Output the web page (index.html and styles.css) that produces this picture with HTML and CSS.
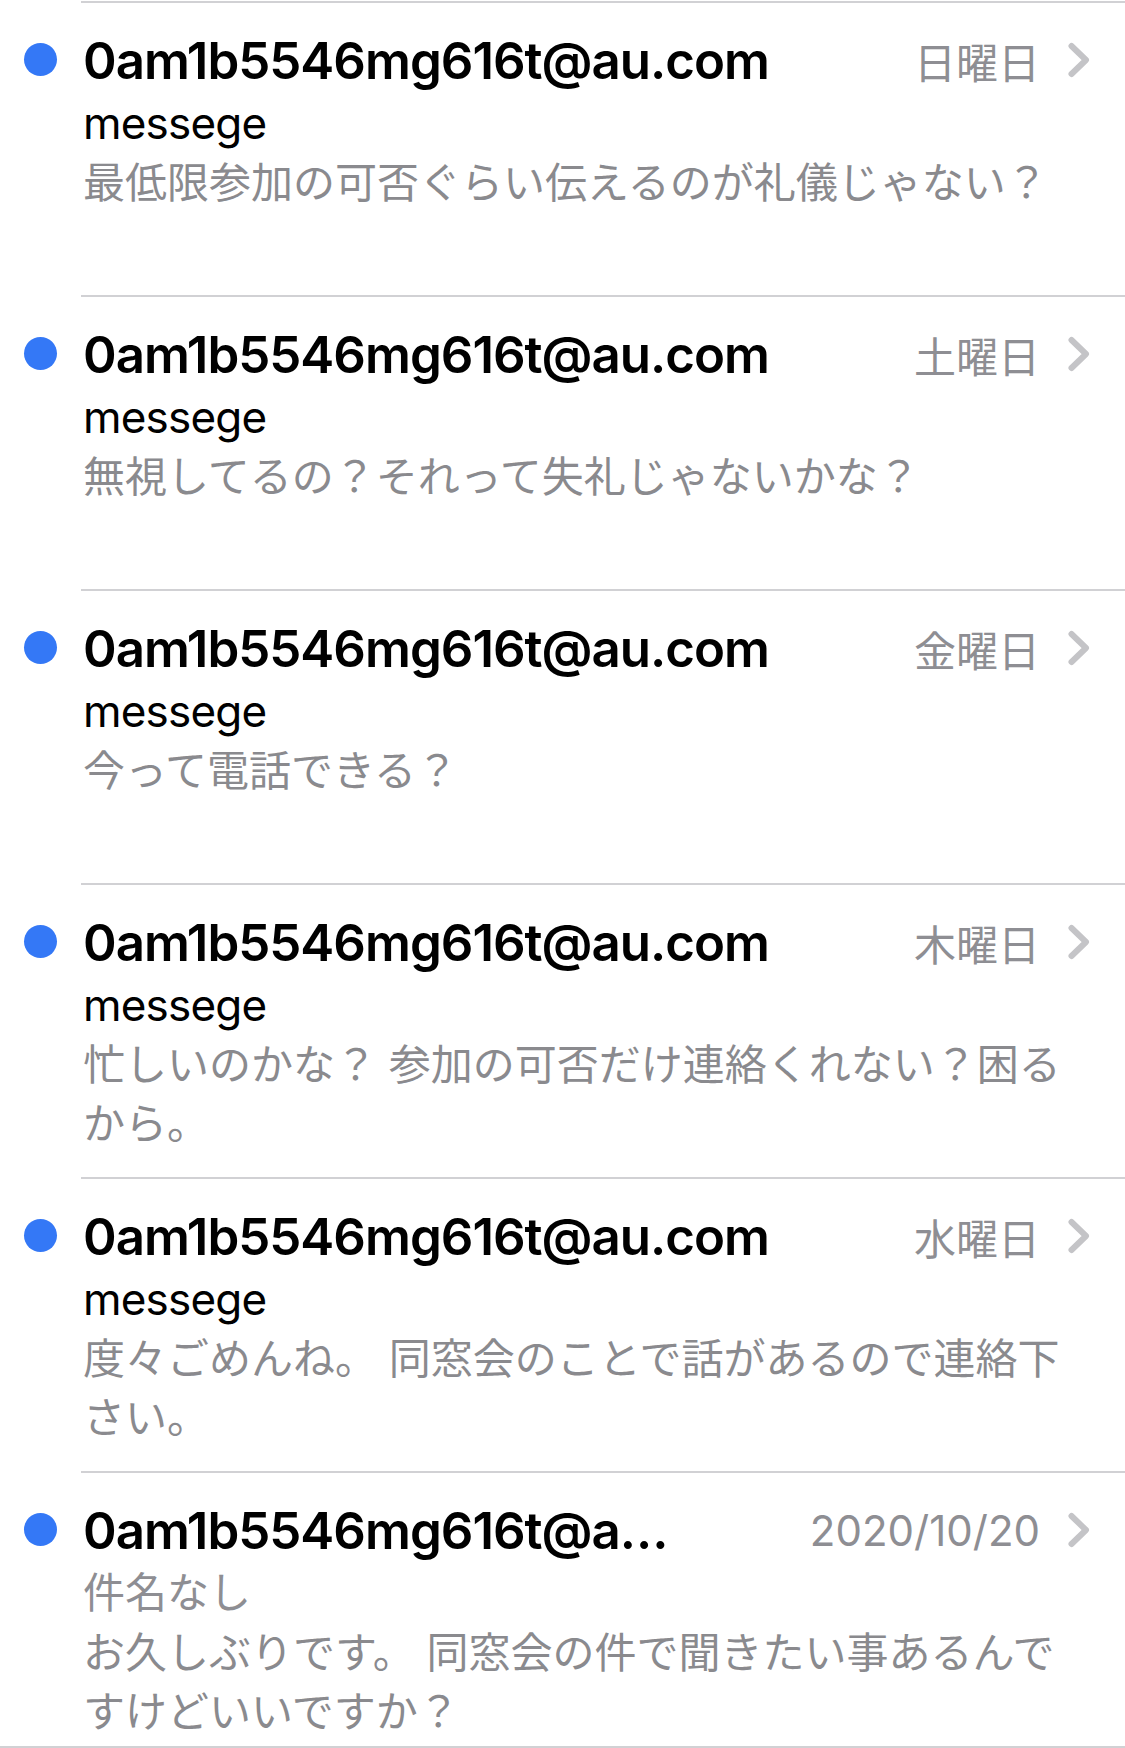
FILE: index.html
```html
<!DOCTYPE html>
<html lang="ja">
<head>
    <meta charset="UTF-8">
    <meta name="viewport" content="width=device-width, initial-scale=1.0">
    <title>受信</title>
    <link rel="stylesheet" href="styles.css">
</head>
<body>
    <div class="screen">
        <ul class="mail-list">
            <li class="mail">
                <div class="mail-mark"><span class="unread-dot"></span></div>
                <div class="mail-body">
                    <div class="mail-head">
                        <span class="sender">0am1b5546mg616t@au.com</span>
                        <span class="date">日曜日</span>
                        <svg class="chevron" viewBox="0 0 24 36"><path d="M4.5 4 L19 18 L4.5 32"/></svg>
                    </div>
                    <div class="subject">messege</div>
                    <div class="preview">最低限参加の可否ぐらい伝えるのが礼儀じゃない？</div>
                </div>
            </li>
            <li class="mail">
                <div class="mail-mark"><span class="unread-dot"></span></div>
                <div class="mail-body">
                    <div class="mail-head">
                        <span class="sender">0am1b5546mg616t@au.com</span>
                        <span class="date">土曜日</span>
                        <svg class="chevron" viewBox="0 0 24 36"><path d="M4.5 4 L19 18 L4.5 32"/></svg>
                    </div>
                    <div class="subject">messege</div>
                    <div class="preview">無視してるの？それって失礼じゃないかな？</div>
                </div>
            </li>
            <li class="mail">
                <div class="mail-mark"><span class="unread-dot"></span></div>
                <div class="mail-body">
                    <div class="mail-head">
                        <span class="sender">0am1b5546mg616t@au.com</span>
                        <span class="date">金曜日</span>
                        <svg class="chevron" viewBox="0 0 24 36"><path d="M4.5 4 L19 18 L4.5 32"/></svg>
                    </div>
                    <div class="subject">messege</div>
                    <div class="preview">今って電話できる？</div>
                </div>
            </li>
            <li class="mail">
                <div class="mail-mark"><span class="unread-dot"></span></div>
                <div class="mail-body">
                    <div class="mail-head">
                        <span class="sender">0am1b5546mg616t@au.com</span>
                        <span class="date">木曜日</span>
                        <svg class="chevron" viewBox="0 0 24 36"><path d="M4.5 4 L19 18 L4.5 32"/></svg>
                    </div>
                    <div class="subject">messege</div>
                    <div class="preview">忙しいのかな？ 参加の可否だけ連絡くれない？困るから。</div>
                </div>
            </li>
            <li class="mail">
                <div class="mail-mark"><span class="unread-dot"></span></div>
                <div class="mail-body">
                    <div class="mail-head">
                        <span class="sender">0am1b5546mg616t@au.com</span>
                        <span class="date">水曜日</span>
                        <svg class="chevron" viewBox="0 0 24 36"><path d="M4.5 4 L19 18 L4.5 32"/></svg>
                    </div>
                    <div class="subject">messege</div>
                    <div class="preview">度々ごめんね。 同窓会のことで話があるので連絡下さい。</div>
                </div>
            </li>
            <li class="mail">
                <div class="mail-mark"><span class="unread-dot"></span></div>
                <div class="mail-body">
                    <div class="mail-head">
                        <span class="sender">0am1b5546mg616t@au.com</span>
                        <span class="date">2020/10/20</span>
                        <svg class="chevron" viewBox="0 0 24 36"><path d="M4.5 4 L19 18 L4.5 32"/></svg>
                    </div>
                    <div class="subject no-subject">件名なし</div>
                    <div class="preview">お久しぶりです。 同窓会の件で聞きたい事あるんですけどいいですか？</div>
                </div>
            </li>
        </ul>
        <div class="toolbar"></div>
    </div>
</body>
</html>
```

FILE: styles.css
```css
body {
    margin: 0;
    background: #fff;
    font-family: Inter, "Noto Sans CJK JP", sans-serif;
    color: #000;
}
.screen {
    height: 1748px;
    display: flex;
    flex-direction: column;
}
.mail-list {
    flex: 1;
    margin: 0;
    padding: 1px 0 0;
    list-style: none;
    overflow: hidden;
}
.mail {
    display: flex;
    height: 294px;
}
.mail-mark {
    flex: none;
    width: 81px;
}
.unread-dot {
    display: block;
    width: 33px;
    height: 33px;
    margin: 42px 0 0 24px;
    border-radius: 50%;
    background: #3478f6;
}
.mail-body {
    flex: 1;
    min-width: 0;
    border-top: 2px solid #d1d1d4;
    padding: 24px 34px 0 2px;
}
.mail-head {
    display: flex;
    align-items: center;
    height: 66px;
}
.sender {
    flex: 1;
    min-width: 0;
    margin-right: 128px;
    font-size: 51px;
    font-weight: 600;
    letter-spacing: -1px;
    white-space: nowrap;
    overflow: hidden;
    text-overflow: ellipsis;
}
.date {
    flex: none;
    font-size: 42px;
    color: #8e8e93;
}
.chevron {
    flex: none;
    width: 24px;
    height: 36px;
    margin-left: 27px;
    fill: none;
    stroke: #c4c4c7;
    stroke-width: 6;
    stroke-linecap: round;
    stroke-linejoin: round;
}
.subject {
    font-size: 44px;
    letter-spacing: -0.8px;
    line-height: 60px;
}
.no-subject {
    font-size: 42px;
    letter-spacing: 0;
    color: #8e8e93;
}
.preview {
    font-size: 42px;
    line-height: 59px;
    color: #8a8a8e;
    display: -webkit-box;
    -webkit-line-clamp: 2;
    -webkit-box-orient: vertical;
    overflow: hidden;
}
.toolbar {
    flex: none;
    height: 2px;
    background: #d1d1d4;
}
```
